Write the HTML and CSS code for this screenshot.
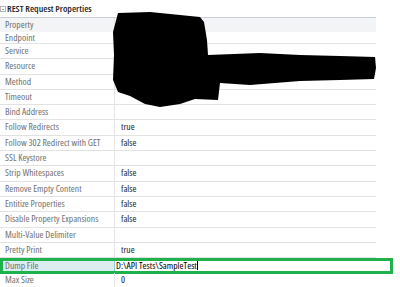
FILE: index.html
```html
<!DOCTYPE html>
<html lang="en">
<head>
    <meta charset="UTF-8">
    <title>REST Request Properties</title>
    <link rel="stylesheet" href="styles.css">
</head>
<body>

<div class="panel">
    <div class="panel-title">
        <span class="collapse-icon"></span>
        REST Request Properties
    </div>

    <div class="props">
        <div class="row head"><div class="name">Property</div><div class="value"></div></div>
        <div class="row short"><div class="name">Endpoint</div><div class="value"></div></div>
        <div class="row"><div class="name">Service</div><div class="value"></div></div>
        <div class="row"><div class="name">Resource</div><div class="value"></div></div>
        <div class="row"><div class="name">Method</div><div class="value"></div></div>
        <div class="row"><div class="name">Timeout</div><div class="value"></div></div>
        <div class="row"><div class="name">Bind Address</div><div class="value"></div></div>
        <div class="row"><div class="name">Follow Redirects</div><div class="value">true</div></div>
        <div class="row"><div class="name">Follow 302 Redirect with GET</div><div class="value">false</div></div>
        <div class="row"><div class="name">SSL Keystore</div><div class="value"></div></div>
        <div class="row"><div class="name">Strip Whitespaces</div><div class="value">false</div></div>
        <div class="row"><div class="name">Remove Empty Content</div><div class="value">false</div></div>
        <div class="row"><div class="name">Entitize Properties</div><div class="value">false</div></div>
        <div class="row"><div class="name">Disable Property Expansions</div><div class="value">false</div></div>
        <div class="row"><div class="name">Multi-Value Delimiter</div><div class="value"></div></div>
        <div class="row"><div class="name">Pretty Print</div><div class="value">true</div></div>
        <div class="row editing">
            <div class="name">Dump File</div>
            <div class="value">D:\API Tests\SampleTest<span class="caret"></span></div>
            <div class="highlight"></div>
        </div>
        <div class="row"><div class="name">Max Size</div><div class="value">0</div></div>
    </div>

    <!-- zone masquée -->
    <svg class="redact" width="400" height="287" viewBox="0 0 400 287">
        <path d="M118 13 L150 12 L200 17 L204 22 L207 40 L208 55 L260 53 L300 55 L340 56 L375 57 L376 68 L374 79 L340 80 L300 81 L250 85 L220 83 L218 100 L195 99 L180 104 L160 107 L145 104 L130 96 L118 92 L113 80 L114 55 L113 32 Z" fill="#000"/>
    </svg>
</div>

</body>
</html>
```

FILE: styles.css
```css
body {
    margin: 0;
    background: #fff;
    font-family: "Open Sans", sans-serif;
    font-stretch: condensed;
    font-size: 9.6px;
}

.panel {
    position: relative;
    width: 400px;
    height: 287px;
    overflow: hidden;
}

.panel-title {
    height: 17px;
    line-height: 18px;
    padding-left: 7px;
    font-weight: 600;
    color: #1e1e1e;
    position: relative;
}

.collapse-icon {
    position: absolute;
    left: 0;
    top: 6px;
    width: 4px;
    height: 4px;
    border: 1px solid #b5b5b5;
}

.collapse-icon::after {
    content: "";
    position: absolute;
    left: 1px;
    top: 2px;
    width: 2px;
    height: 1px;
    background: #999;
}

/* --- TABLE DES PROPRIETES --- */
.props {
    width: 376px;
    border-top: 1px solid #c8cdd6;
}

.row {
    display: grid;
    grid-template-columns: 115px minmax(0, 1fr);
    height: 14.3px;
    border-bottom: 1px solid #e2e2e2;
    position: relative;
}

.row.head {
    height: 14px;
    background: #f3f4f6;
    border-bottom: none;
}

.row.short { height: 11px; }

.name {
    padding-left: 5px;
    color: #707070;
    line-height: 14px;
    border-right: 1px solid #e4e4e4;
    white-space: nowrap;
}

.row.short .name { line-height: 11px; }

.value {
    padding-left: 6px;
    color: #1c1c1c;
    line-height: 14px;
}

/* ligne en edition */
.row.editing {
    border-bottom: none;
    height: 15.3px;
}

.row.editing .name {
    background: #dcedf0;
    border-right: 1px solid #8fcbd6;
    margin: 3px 0 2px 3px;
    padding-left: 2px;
    line-height: 10px;
}

.row.editing .value {
    padding-left: 1px;
    color: #000;
    line-height: 15px;
}

.caret {
    display: inline-block;
    width: 1px;
    height: 10px;
    background: #000;
    vertical-align: -1px;
}

.highlight {
    position: absolute;
    left: 0;
    top: 0;
    width: 387px;
    height: 10px;
    border: 3px solid #1fb14b;
}

.redact {
    position: absolute;
    left: 0;
    top: 0;
    pointer-events: none;
}
```
